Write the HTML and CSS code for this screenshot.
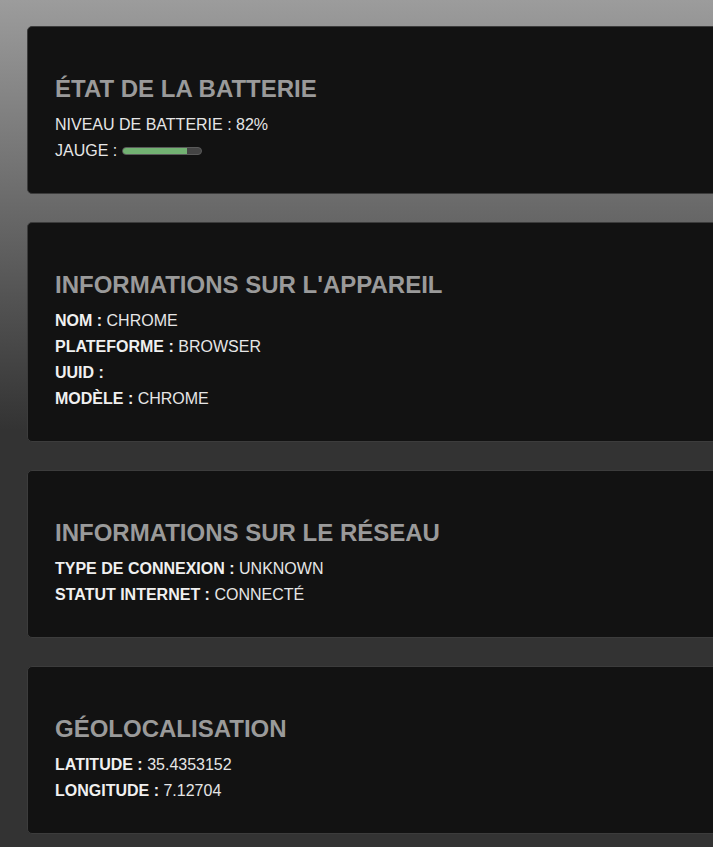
FILE: index.html
```html
<!DOCTYPE html>
<html lang="fr">
<head>
<meta charset="utf-8">
<title>Infos appareil</title>
<link rel="stylesheet" href="styles.css">
</head>
<body>
<div class="page">
  <section class="card">
    <h2 class="card-title">État de la batterie</h2>
    <p class="row">Niveau de batterie : 82%</p>
    <p class="row">Jauge : <span class="gauge"><span class="gauge-fill" style="width:82%"></span></span></p>
  </section>
  <section class="card">
    <h2 class="card-title">Informations sur l'appareil</h2>
    <p class="row"><strong class="label">Nom :</strong> Chrome</p>
    <p class="row"><strong class="label">Plateforme :</strong> browser</p>
    <p class="row"><strong class="label">UUID :</strong> </p>
    <p class="row"><strong class="label">Modèle :</strong> Chrome</p>
  </section>
  <section class="card">
    <h2 class="card-title">Informations sur le réseau</h2>
    <p class="row"><strong class="label">Type de connexion :</strong> unknown</p>
    <p class="row"><strong class="label">Statut Internet :</strong> Connecté</p>
  </section>
  <section class="card">
    <h2 class="card-title">Géolocalisation</h2>
    <p class="row"><strong class="label">Latitude :</strong> 35.4353152</p>
    <p class="row"><strong class="label">Longitude :</strong> 7.12704</p>
  </section>
</div>
</body>
</html>
```

FILE: styles.css
```css
html, body {
  margin: 0;
  padding: 0;
}
body {
  min-height: 100vh;
  background: #333333 linear-gradient(to bottom, #9c9c9c 0px, #333333 430px) no-repeat;
  font-family: "Liberation Sans", Arial, sans-serif;
  color: #e6e6e6;
  overflow: hidden;
}
.page {
  display: flex;
  flex-direction: column;
  gap: 28.25px;
  padding: 26px 0 0 27px;
  overflow: hidden;
}
.card {
  margin-right: -30px;
  background: #121212;
  border: 1px solid #3c3c3c;
  border-radius: 5px;
  padding: 30px 28px 29.5px 27px;
  text-transform: uppercase;
}
.card-title {
  margin: 19px 0 10px;
  font-size: 24px;
  line-height: 26px;
  font-weight: bold;
  color: #9a9a9a;
}
.row {
  margin: 0;
  font-size: 16px;
  line-height: 25.75px;
  color: #e6e6e6;
}
.label {
  font-weight: bold;
  color: #f0f0f0;
}
.gauge {
  display: inline-block;
  vertical-align: middle;
  width: 80px;
  height: 8px;
  box-sizing: border-box;
  border: 1px solid #5a5a5a;
  border-radius: 4px;
  background: #444444;
  overflow: hidden;
  position: relative;
  top: -1px;
}
.gauge-fill {
  display: block;
  height: 100%;
  background: #72b172;
}
```
